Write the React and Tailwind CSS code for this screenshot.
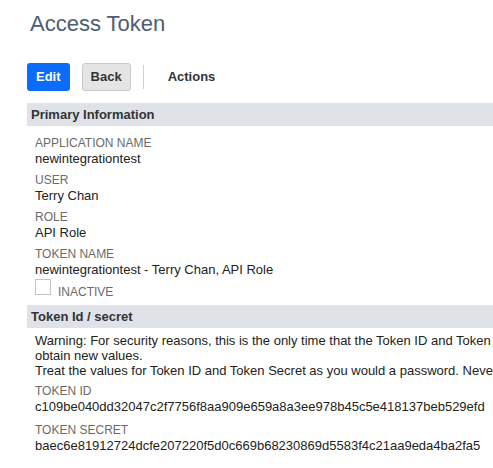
export default function App() {
  const Field = ({ label, value, className = "" }) => (
    <div className={className}>
      <div className="text-[12px] leading-[15px] text-[#6b6b6b] uppercase">{label}</div>
      <div className="text-[13px] leading-[16px] text-[#222222] whitespace-nowrap">{value}</div>
    </div>
  );
  return (
    <div className="w-[493px] h-[468px] overflow-hidden bg-white font-['Liberation_Sans',Arial,sans-serif]">
      <div className="pt-[11px] pl-[30px]">
        <h1 className="text-[22px] leading-[26px] text-[#4d5d72] font-normal">Access Token</h1>
      </div>
      <div className="mt-[26px] pl-[27px] flex items-center h-[28px]">
        <button className="h-[28px] px-[9px] bg-[#0b6cfb] text-white text-[13px] font-bold rounded-[3px]">Edit</button>
        <button className="ml-[12px] h-[28px] px-[8px] bg-[#e5e5e5] border border-[#c8c8c8] text-[#333333] text-[13px] font-bold rounded-[3px]">Back</button>
        <div className="ml-[12px] w-px h-[24px] bg-[#d0d0d0]"></div>
        <button className="ml-[24px] text-[13px] font-bold text-[#333333]">Actions</button>
      </div>
      <div className="mt-[12px] ml-[27px] w-[600px]">
        <div className="h-[23px] bg-[#dfe3e9] pl-[4px] text-[13px] leading-[23px] font-bold text-[#333333]">Primary Information</div>
        <div className="pl-[8px] pt-[10px]">
          <Field label="Application Name" value="newintegrationtest" className="mb-[6px]" />
          <Field label="User" value="Terry Chan" className="mb-[6px]" />
          <Field label="Role" value="API Role" className="mb-[6px]" />
          <Field label="Token Name" value="newintegrationtest - Terry Chan, API Role" />
          <div className="mt-[1px] flex items-start">
            <div className="w-[16px] h-[16px] border border-[#c4c4c4] bg-white"></div>
            <div className="ml-[7px] mt-[6px] text-[12px] leading-[15px] text-[#6b6b6b]">INACTIVE</div>
          </div>
        </div>
        <div className="mt-[5px] h-[23px] bg-[#dfe3e9] pl-[4px] text-[13px] leading-[23px] font-bold text-[#333333]">Token Id / secret</div>
        <div className="pl-[8px] pt-[5px]">
          <div className="text-[13px] leading-[15px] text-[#222222] whitespace-nowrap">
            <div>Warning: For security reasons, this is the only time that the Token ID and Token Secret will be displayed. If you lose them, you will need to reset the token to</div>
            <div>obtain new values.</div>
            <div>Treat the values for Token ID and Token Secret as you would a password. Never share these credentials with unauthorized people.</div>
          </div>
          <Field label="Token ID" value="c109be040dd32047c2f7756f8aa909e659a8a3ee978b45c5e418137beb529efd" className="mt-[6px] mb-[8px]" />
          <Field label="Token Secret" value="baec6e81912724dcfe207220f5d0c669b68230869d5583f4c21aa9eda4ba2fa5" />
        </div>
      </div>
    </div>
  );
}
